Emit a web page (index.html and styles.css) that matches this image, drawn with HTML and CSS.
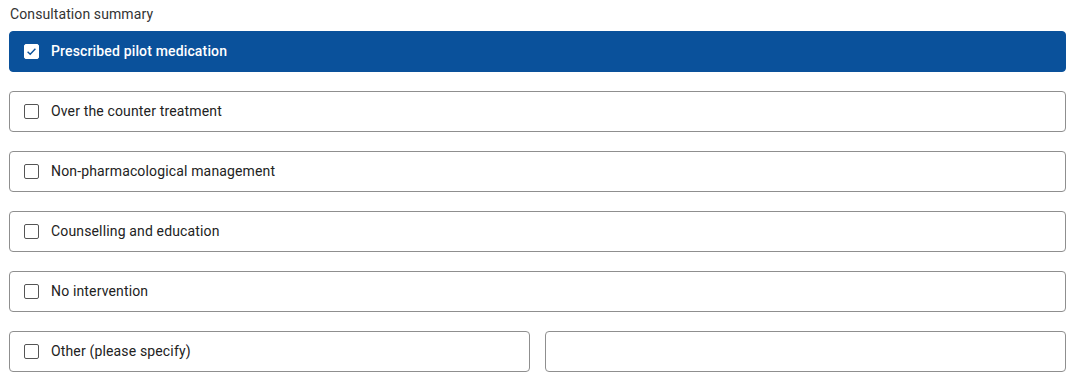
FILE: index.html
```html
<!DOCTYPE html>
<html lang="en">
<head>
<meta charset="utf-8">
<title>Consultation summary</title>
<link rel="stylesheet" href="styles.css">
</head>
<body>
<div class="field">
  <div class="field-label">Consultation summary</div>
  <div class="options">
    <label class="option option-checked">
      <span class="box box-checked">
        <svg viewBox="0 0 15 15" width="15" height="15"><path d="M3.6 7.8 L6.2 10.3 L11.4 4.8" fill="none" stroke="#0a519b" stroke-width="1.4"/></svg>
      </span>
      <span class="option-text">Prescribed pilot medication</span>
    </label>
    <label class="option"><span class="box"></span><span class="option-text">Over the counter treatment</span></label>
    <label class="option"><span class="box"></span><span class="option-text">Non-pharmacological management</span></label>
    <label class="option"><span class="box"></span><span class="option-text">Counselling and education</span></label>
    <label class="option"><span class="box"></span><span class="option-text">No intervention</span></label>
    <div class="other-row">
      <label class="option"><span class="box"></span><span class="option-text">Other (please specify)</span></label>
      <div class="other-input"></div>
    </div>
  </div>
</div>
</body>
</html>
```
FILE: styles.css
```css
html, body {
  margin: 0;
  padding: 0;
  background: #ffffff;
}
body {
  font-family: Roboto, "Liberation Sans", Arial, sans-serif;
  color: #222222;
}
.field {
  padding: 4px 24px 0 9px;
}
.field-label {
  font-size: 14px;
  line-height: 20px;
  color: #333333;
  padding-left: 1px;
  letter-spacing: 0.1px;
  margin-bottom: 7px;
}
.options {
  display: flex;
  flex-direction: column;
  gap: 19px;
}
.option {
  display: flex;
  align-items: center;
  height: 41px;
  box-sizing: border-box;
  border: 1px solid #8f8f8f;
  border-radius: 4px;
  padding: 0 0 1px 14px;
  font-size: 14px;
  letter-spacing: 0.15px;
  color: #222222;
}
.option-checked {
  background: #0a519b;
  border-color: #0a519b;
  color: #ffffff;
  font-weight: 500;
}
.box {
  width: 15px;
  height: 15px;
  box-sizing: border-box;
  border: 1px solid #555555;
  border-radius: 2px;
  margin-right: 12px;
  flex: none;
  display: flex;
}
.box-checked {
  background: #ffffff;
  border-color: #ffffff;
}
.box svg {
  margin: -1px;
}
.other-row {
  display: grid;
  grid-template-columns: 1fr 1fr;
  gap: 15px;
}
.other-input {
  height: 41px;
  box-sizing: border-box;
  border: 1px solid #8f8f8f;
  border-radius: 4px;
}
```
